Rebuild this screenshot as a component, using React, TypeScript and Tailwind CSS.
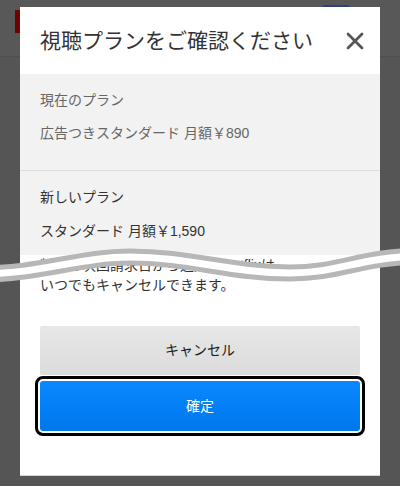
import React from "react";

const jp = { fontFamily: '"Liberation Sans", "Noto Sans CJK JP", sans-serif' };

function CloseIcon() {
  return (
    <svg width="18" height="18" viewBox="0 0 18 18" className="text-[#555]">
      <path d="M2 2 L16 16 M16 2 L2 16" stroke="currentColor" strokeWidth="2.8" strokeLinecap="round" />
    </svg>
  );
}

function Wave() {
  const d = "M -20 274 C 40 274, 80 257, 130 257 C 190 257, 230 273, 290 273 C 340 273, 360 257, 420 256";
  return (
    <svg className="pointer-events-none absolute left-0 top-[230px]" width="400" height="70" viewBox="0 230 400 70">
      <path d={d} fill="none" stroke="#b7b7b7" strokeWidth="17" />
      <path d={d} fill="none" stroke="#ffffff" strokeWidth="7" />
    </svg>
  );
}

export default function App() {
  return (
    <div className="relative h-[486px] w-[400px] overflow-hidden bg-[#555555]" style={jp}>
      {/* 背景のページ */}
      <div className="flex h-[57px] items-start border-b border-black/10 bg-[#585858] pl-[15px]">
        <div className="mt-[10px] h-[23px] w-[40px] bg-[#6b0303]" />
        <div className="ml-auto mr-[50px] mt-[5px] h-[30px] w-[28px] rounded-[3px] bg-[#2c4474]" />
      </div>

      {/* ダイアログ */}
      <div className="absolute left-[20px] top-[7px] flex h-[469px] w-[360px] flex-col border-b border-[#d6d6d6] bg-white">
        <div className="flex h-[67px] items-center justify-between pl-5 pr-[16px]">
          <h2 className="text-[21px] leading-7 text-[#333]">視聴プランをご確認ください</h2>
          <CloseIcon />
        </div>

        <div className="flex h-[97px] flex-col border-b border-[#dcdcdc] bg-[#f2f2f2] px-5 pt-4 text-[14px] leading-5 text-[#666]">
          <p>現在のプラン</p>
          <p className="mt-[13px]">広告つきスタンダード 月額￥890</p>
        </div>

        <div className="flex flex-col bg-[#f2f2f2] px-5 pb-[14px] pt-4 text-[14px] leading-5 text-[#333]">
          <p>新しいプラン</p>
          <p className="mt-[14px]">スタンダード 月額￥1,590</p>
        </div>

        <p className="px-5 text-[14px] leading-5 text-[#333]">
          料金は次回請求日から適用。Netflixは
          <br />
          いつでもキャンセルできます。
        </p>

        <div className="mx-5 mt-[31px] flex flex-col gap-[6px]">
          <button className="h-[49px] w-full rounded-[2px] bg-linear-to-b from-[#e7e7e7] to-[#dcdcdc] text-[14px] text-[#1a1a1a]">
            キャンセル
          </button>
          <button className="h-[50px] w-full rounded-[3px] bg-linear-to-b from-[#0a88ff] to-[#0077ec] text-[14px] text-white outline-[3px] outline-offset-2 outline-black outline-solid">
            確定
          </button>
        </div>
      </div>

      <Wave />
    </div>
  );
}
